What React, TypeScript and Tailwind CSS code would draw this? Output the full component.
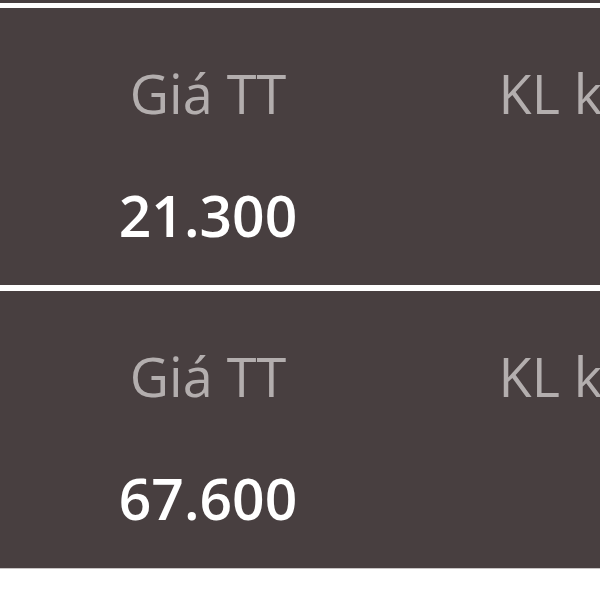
import React from "react";

const rows = [{ price: "21.300" }, { price: "67.600" }];

function Card({ price }: { price: string }) {
  return (
    <div className="h-[277px] w-full overflow-hidden bg-[#483f40] pl-[12px]">
      <div className="flex w-[1200px]">
        <div className="flex w-[392px] shrink-0 flex-col items-center pt-[49px]">
          <div className="text-[54px] leading-[72px] text-[#b3aeae] whitespace-nowrap">Giá TT</div>
          <div className="mt-[48px] text-[57px] leading-[77px] font-semibold text-white whitespace-nowrap">{price}</div>
        </div>
        <div className="flex w-[392px] shrink-0 flex-col items-center pt-[49px]">
          <div className="text-[54px] leading-[72px] text-[#b3aeae] whitespace-nowrap">KL khớp</div>
          <div className="mt-[48px] text-[57px] leading-[77px] font-semibold text-white whitespace-nowrap">&nbsp;</div>
        </div>
      </div>
    </div>
  );
}

export default function App() {
  return (
    <div className="h-[600px] w-[600px] overflow-hidden bg-white" style={{ fontFamily: '"Open Sans", "Noto Sans", sans-serif' }}>
      <div className="h-[3px] bg-[#483f40]" />
      <div className="mt-[5px] flex flex-col gap-[6px]">
        {rows.map((r) => (
          <Card key={r.price} price={r.price} />
        ))}
      </div>
      <div className="h-[1px] bg-[#c8c4c4]" />
    </div>
  );
}
